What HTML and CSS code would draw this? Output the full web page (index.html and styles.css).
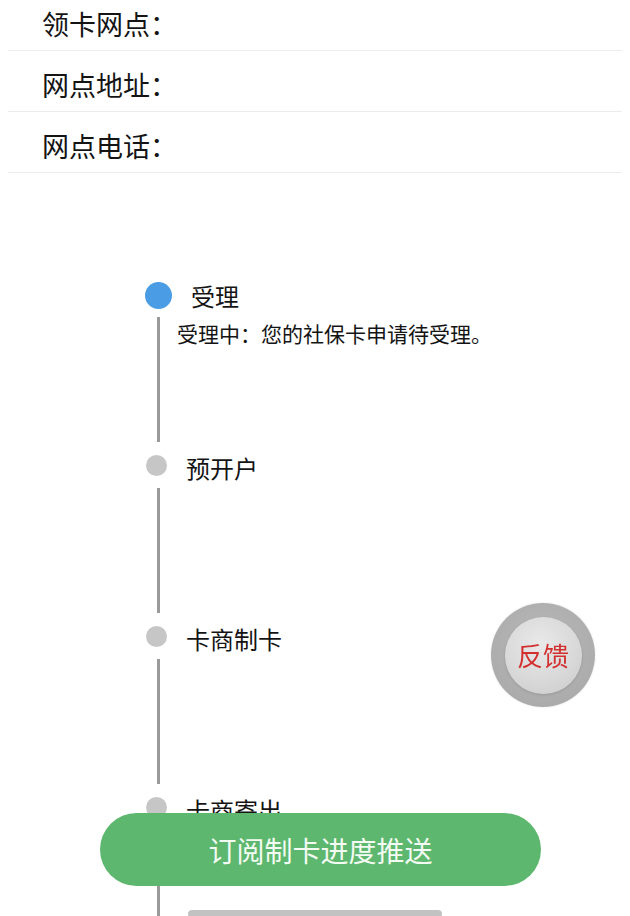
FILE: index.html
```html
<!DOCTYPE html>
<html lang="zh-CN">
<head>
<meta charset="utf-8">
<title>社保卡进度</title>
<link rel="stylesheet" href="styles.css">
</head>
<body>
<div class="info">
  <div class="info-row">领卡网点：</div>
  <div class="info-row">网点地址：</div>
  <div class="info-row">网点电话：</div>
</div>

<div class="timeline">
  <div class="item item-active">
    <div class="head"><span class="dot"></span><span class="label">受理</span></div>
    <div class="body"><span class="seg"></span><p class="desc">受理中：您的社保卡申请待受理。</p></div>
  </div>
  <div class="item">
    <div class="head"><span class="dot"></span><span class="label">预开户</span></div>
    <div class="body"><span class="seg"></span></div>
  </div>
  <div class="item">
    <div class="head"><span class="dot"></span><span class="label">卡商制卡</span></div>
    <div class="body"><span class="seg"></span></div>
  </div>
  <div class="item">
    <div class="head"><span class="dot"></span><span class="label">卡商寄出</span></div>
    <div class="body"><span class="seg"></span></div>
  </div>
</div>

<div class="feedback"><div class="feedback-inner">反馈</div></div>
<button class="subscribe">订阅制卡进度推送</button>
<div class="bottom-bar"></div>
</body>
</html>
```

FILE: styles.css
```css
html, body {
  margin: 0;
  padding: 0;
  background: #ffffff;
}
body {
  font-family: "Noto Sans CJK SC", "Noto Sans", sans-serif;
  color: #141414;
  width: 630px;
  overflow: hidden;
}
.info {
  margin-top: -10px;
}
.info-row {
  margin: 0 8px;
  height: 61px;
  box-sizing: border-box;
  border-bottom: 1px solid #ececec;
  padding: 20px 0 0 34px;
  font-size: 27px;
  line-height: 28px;
}
.timeline {
  margin-top: 109px;
}
.head {
  display: flex;
  align-items: center;
  height: 21px;
  padding-left: 146px;
  gap: 19px;
}
.dot {
  width: 21px;
  height: 21px;
  border-radius: 50%;
  background: #c6c6c6;
  flex: none;
}
.label {
  font-size: 24px;
  line-height: 21px;
  padding-top: 3px;
}
.body {
  display: flex;
  align-items: flex-start;
  padding-left: 157px;
}
.seg {
  width: 3px;
  height: 125px;
  margin: 12px 0 13px;
  background: #9a9a9a;
  flex: none;
}
.desc {
  margin: 14px 0 0 17px;
  font-size: 21px;
  line-height: 20px;
}
.item-active .head {
  height: 27px;
  padding-left: 145px;
}
.item-active .dot {
  width: 27px;
  height: 27px;
  background: #4a9de4;
}
.item-active .label {
  line-height: 27px;
  padding-top: 0;
}
.item-active .seg {
  margin-top: 8px;
}
.feedback {
  position: fixed;
  left: 491px;
  top: 603px;
  width: 104px;
  height: 104px;
  border-radius: 50%;
  background: radial-gradient(circle at 50% 40%, #b9b9b9 0%, #acacac 70%, #a2a2a2 100%);
  box-shadow: 0 0 2px rgba(0,0,0,0.15);
  display: flex;
  align-items: center;
  justify-content: center;
}
.feedback-inner {
  width: 77px;
  height: 77px;
  border-radius: 50%;
  background: radial-gradient(circle at 45% 35%, #e9e9e9 0%, #d9d9d9 55%, #c9c9c9 100%);
  box-shadow: 0 1px 3px rgba(0,0,0,0.12);
  display: flex;
  align-items: center;
  justify-content: center;
  color: #d2302e;
  font-size: 26px;
  line-height: 26px;
}
.subscribe {
  position: fixed;
  left: 100px;
  top: 813px;
  width: 441px;
  height: 73px;
  border: none;
  border-radius: 37px;
  background: #5db76e;
  color: #f3fbf3;
  font-family: "Noto Sans CJK SC", "Noto Sans", sans-serif;
  font-size: 28px;
  padding: 0;
  letter-spacing: 0;
}
.bottom-bar {
  position: fixed;
  left: 188px;
  top: 910px;
  width: 254px;
  height: 8px;
  border-radius: 4px;
  background: #c2c2c2;
}
```
